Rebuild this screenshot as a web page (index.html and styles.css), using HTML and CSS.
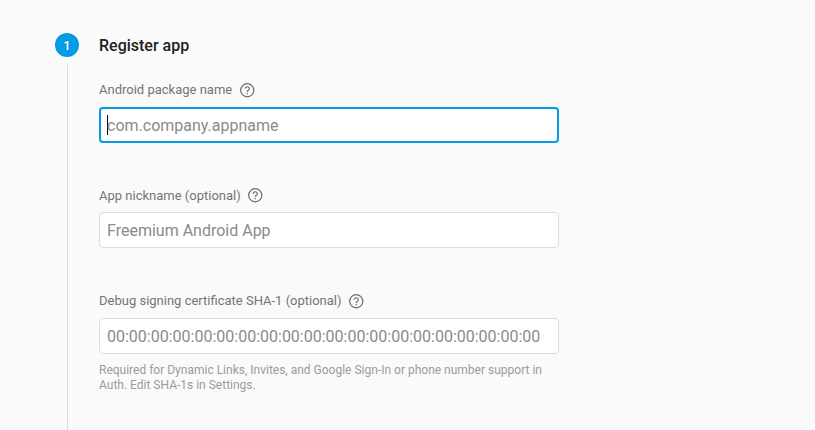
FILE: index.html
```html
<!DOCTYPE html>
<html lang="en">
<head>
<meta charset="utf-8">
<title>Register app</title>
<link rel="stylesheet" href="styles.css">
</head>
<body>
<svg class="defs" width="0" height="0"><symbol id="help" viewBox="0 0 16 16"><circle cx="8" cy="8" r="6.350" fill="none" stroke="currentColor" stroke-width="1.200"/><path d="M5.950 6.650a2.050 2.050 0 1 1 4.100 0c0 1.250-2.050 1.450-2.050 3" fill="none" stroke="currentColor" stroke-width="1.100"/><path d="M7.400 10.600h1.200v1.200h-1.200z" fill="currentColor"/></symbol></svg>
<main class="step">
  <div class="rail"><span class="number">1</span><span class="line"></span></div>
  <form class="content">
    <h1>Register app</h1>
    <section class="field">
      <div class="label"><span>Android package name</span><svg class="help"><use href="#help"/></svg></div>
      <div class="input focused"><i class="caret"></i><span>com.company.appname</span></div>
    </section>
    <section class="field nickname">
      <div class="label"><span>App nickname (optional)</span><svg class="help"><use href="#help"/></svg></div>
      <div class="input"><span>Freemium Android App</span></div>
    </section>
    <section class="field">
      <div class="label"><span>Debug signing certificate SHA-1 (optional)</span><svg class="help"><use href="#help"/></svg></div>
      <div class="input"><span>00:00:00:00:00:00:00:00:00:00:00:00:00:00:00:00:00:00:00:00</span></div>
      <p class="hint">Required for Dynamic Links, Invites, and Google Sign-In or phone number support in<br>Auth. Edit SHA-1s in Settings.</p>
    </section>
  </form>
</main>
</body>
</html>
```
FILE: styles.css
```css
* { box-sizing: border-box; }
body { margin: 0; background: #fafafa; font-family: Roboto, sans-serif; overflow: hidden; }
.defs { display: block; }
.step { display: flex; height: 430px; padding: 33px 0 0 55px; gap: 20px; }
.rail { width: 24px; display: flex; flex-direction: column; align-items: center; gap: 8px; }
.number { width: 24px; height: 24px; flex: none; border-radius: 50%; background: #039be5; color: #fff; font-size: 13px; font-weight: 500; line-height: 25px; text-align: center; }
.line { width: 1px; flex: 1; background: #dcdcdc; }
.content { width: 460px; }
h1 { margin: 0 0 20px; padding-top: 1px; font-size: 16px; font-weight: 500; line-height: 24px; color: #212121; }
.field { height: 106px; }
.label { display: flex; align-items: center; height: 22px; gap: 7px; font-size: 13px; color: #757575; }
.help { width: 16.5px; height: 16.5px; margin-top: 2px; color: #6b6b6b; }
.field + .field .help { margin-left: -0.5px; }
.input { display: flex; align-items: center; height: 36px; margin-top: 7px; padding: 0 7px; border: 1px solid #dedede; border-radius: 4px; background: #fff; color: #8a8a8a; font-size: 16px; white-space: nowrap; }
.nickname { height: 105px; }
.nickname .input { margin-top: 6px; }
.nickname .help { margin-top: 0; }
.focused { border: 2px solid #039be5; padding: 0 6px; }
.caret { width: 1px; height: 20px; margin-right: -1px; background: #000; }
.hint { margin: 9px 0 0; font-size: 12px; line-height: 15px; color: #9b9b9b; white-space: nowrap; }
```
